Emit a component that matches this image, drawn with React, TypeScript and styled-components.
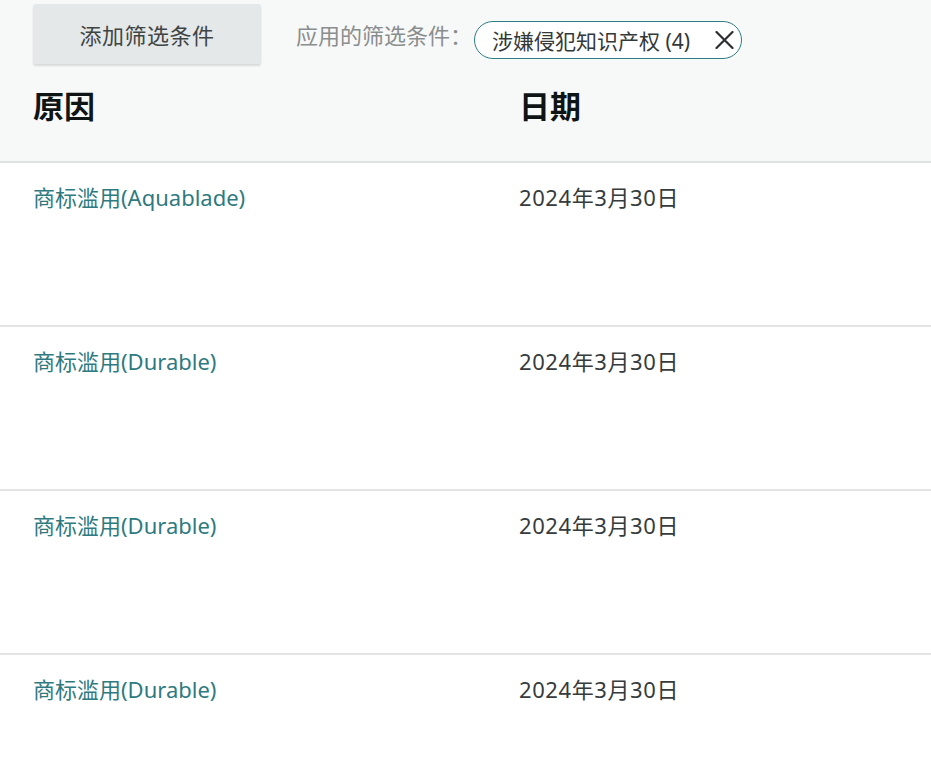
import { FC } from "react";
import styled, { createGlobalStyle } from "styled-components";

const GlobalStyle = createGlobalStyle`
  html, body {
    margin: 0;
    padding: 0;
    background: #ffffff;
    font-family: "Noto Sans", "Noto Sans CJK SC", sans-serif;
  }
`;

interface Row {
  reason: string;
  date: string;
}

const rows: Row[] = [
  { reason: "商标滥用(Aquablade)", date: "2024年3月30日" },
  { reason: "商标滥用(Durable)", date: "2024年3月30日" },
  { reason: "商标滥用(Durable)", date: "2024年3月30日" },
  { reason: "商标滥用(Durable)", date: "2024年3月30日" },
];

const CloseIcon: FC = () => (
  <svg width="21" height="18" viewBox="0 0 21 18" fill="none">
    <path d="M2.5 1 L18.5 17 M18.5 1 L2.5 17" stroke="#2b2f30" strokeWidth="2.2" strokeLinecap="round" />
  </svg>
);

export default function App() {
  return (
    <>
      <GlobalStyle />
      <StyledPage>
        <StyledHeader>
          <StyledToolbar>
            <StyledAddButton>添加筛选条件</StyledAddButton>
            <StyledLabel>应用的筛选条件：</StyledLabel>
            <StyledChip>
              <span>涉嫌侵犯知识产权 (4)</span>
              <CloseIcon />
            </StyledChip>
          </StyledToolbar>
          <StyledGrid>
            <StyledHeading>原因</StyledHeading>
            <StyledHeading>日期</StyledHeading>
          </StyledGrid>
        </StyledHeader>
        {rows.map((row, i) => (
          <StyledRow key={i}>
            <StyledGrid>
              <StyledLink>{row.reason}</StyledLink>
              <StyledDate>{row.date}</StyledDate>
            </StyledGrid>
          </StyledRow>
        ))}
      </StyledPage>
    </>
  );
}

const StyledPage = styled.div`
  width: 931px;
  height: 769px;
  overflow: hidden;
`;
const StyledHeader = styled.div`
  box-sizing: border-box;
  height: 163px;
  background: #f7f8f8;
  border-bottom: 2px solid #dfe2e2;
  padding: 4px 0 0 33px;
`;
const StyledToolbar = styled.div`
  display: flex;
  align-items: center;
  height: 60px;
`;
const StyledAddButton = styled.button`
  box-sizing: border-box;
  width: 228px;
  height: 60px;
  border: none;
  border-radius: 3px;
  background: #e4e8e9;
  box-shadow: 0 2px 2px rgba(0, 0, 0, 0.12);
  font-family: inherit;
  font-size: 22px;
  letter-spacing: 0.5px;
  color: #3f4444;
  padding: 0;
  margin-right: 35px;
`;
const StyledLabel = styled.span`
  font-size: 22px;
  color: #8a8e8e;
  margin-right: 2px;
`;
const StyledChip = styled.div`
  box-sizing: border-box;
  display: flex;
  align-items: center;
  height: 38px;
  width: 268px;
  margin-top: 12px;
  padding: 0 5px 0 17px;
  border: 1.5px solid #2d7e80;
  border-radius: 19px;
  background: #ffffff;
  font-size: 21px;
  color: #333838;
  gap: 24px;
  white-space: nowrap;
`;
const StyledGrid = styled.div`
  display: grid;
  grid-template-columns: 486px 1fr;
  align-items: center;
`;
const StyledHeading = styled.div`
  margin-top: 22px;
  font-size: 31px;
  font-weight: 700;
  line-height: 40px;
  color: #0f1414;
`;
const StyledRow = styled.div`
  box-sizing: border-box;
  height: 164px;
  padding: 19px 0 0 33px;
  border-bottom: 2px solid #e3e5e5;
`;
const StyledLink = styled.div`
  font-size: 22px;
  line-height: 30px;
  color: #2f7a7f;
`;
const StyledDate = styled.div`
  font-size: 22px;
  letter-spacing: 0.6px;
  line-height: 30px;
  color: #363b3c;
`;
